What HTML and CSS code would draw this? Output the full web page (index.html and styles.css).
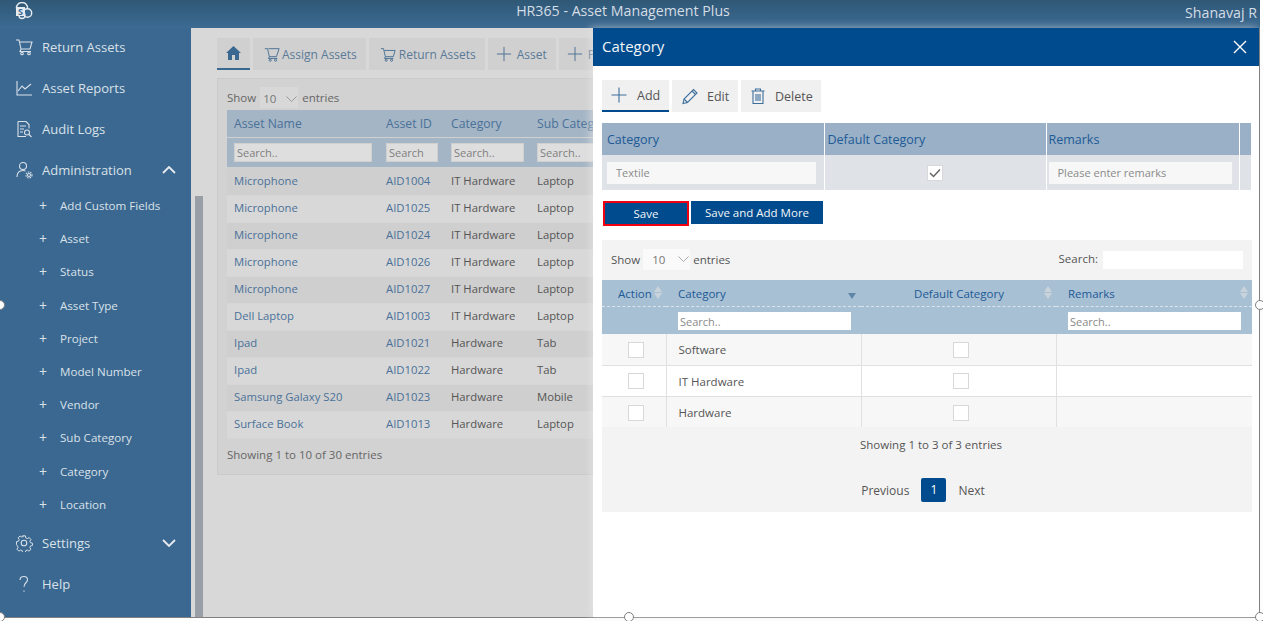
FILE: index.html
```html
<!DOCTYPE html>
<html lang="en">
<head>
    <meta charset="UTF-8">
    <title>HR365 - Asset Management Plus</title>
    <link rel="stylesheet" href="styles.css">
</head>
<body>

<div class="frame">
    <div class="topbar">
        <svg class="logo" width="18" height="18" viewBox="0 0 18 18"><circle cx="7" cy="6" r="5.5" fill="none" stroke="#e6ebf0" stroke-width="1.4"/><circle cx="12.5" cy="11" r="4.2" fill="#3b6890" stroke="#e6ebf0" stroke-width="1.4"/><circle cx="7" cy="13.5" r="3" fill="#3b6890" stroke="#e6ebf0" stroke-width="1.4"/><rect x="1" y="5" width="9" height="9" fill="#e6ebf0"/><text x="5.5" y="12.5" class="logo-s">S</text></svg>
        <span class="app-title">HR365 - Asset Management Plus</span>
        <span class="user-name">Shanavaj R</span>
    </div>

    <div class="body">
        <nav class="sidebar">
            <a class="nav-item">
                <svg class="nav-icon" viewBox="0 0 18 18"><path d="M1 2h3l2 9h9l2-7H5M6 11l-1 2.500h11"/><circle cx="7" cy="15.500" r="1.300"/><circle cx="14" cy="15.500" r="1.300"/></svg>
                Return Assets
            </a>
            <a class="nav-item">
                <svg class="nav-icon" viewBox="0 0 18 18"><path d="M2 2v14h15M3 12l4-5 3 3 6-5"/></svg>
                Asset Reports
            </a>
            <a class="nav-item">
                <svg class="nav-icon" viewBox="0 0 18 18"><path d="M3 1.500h8l3 3v4M3 1.500v15h8M5 6h6M5 9h4M5 12h3"/><circle cx="12" cy="12.500" r="2.500"/><path d="M14 14.500l2.500 2.500"/></svg>
                Audit Logs
            </a>
            <a class="nav-item">
                <svg class="nav-icon" viewBox="0 0 18 18"><circle cx="8" cy="5" r="3.500"/><path d="M2 16c0-4 2-6.500 6-6.500 1 0 2 .2 2.500.5"/><circle cx="14" cy="14" r="1.500"/><circle cx="14" cy="14" r="3" stroke-dasharray="1.500 1"/></svg>
                Administration
                <svg class="nav-arrow" viewBox="0 0 14 8"><path d="M1 7l6-6 6 6"/></svg>
            </a>
            <ul class="sub-nav">
                <li>Add Custom Fields</li>
                <li>Asset</li>
                <li>Status</li>
                <li>Asset Type</li>
                <li>Project</li>
                <li>Model Number</li>
                <li>Vendor</li>
                <li>Sub Category</li>
                <li>Category</li>
                <li>Location</li>
            </ul>
            <a class="nav-item">
                <svg class="nav-icon" viewBox="0 0 18 18"><circle cx="9" cy="9" r="2.800"/><path d="M7.500 1h3l.5 2.300 1.700.8 2-1.200 2 2.200-1.200 2 .7 1.600 2.300.6v2.400l-2.300.6-.7 1.700 1.200 2-2.100 2-2-1.200-1.600.7-.5 2.300h-3l-.5-2.300-1.700-.7-2 1.200-2.100-2.100 1.200-2-.7-1.600L.7 10.700V7.500l2.300-.6.7-1.700-1.200-2 2.100-2 2 1.200 1.700-.8z" transform="translate(.9 .9) scale(.9)"/></svg>
                Settings
                <svg class="nav-arrow" viewBox="0 0 14 8"><path d="M1 1l6 6 6-6"/></svg>
            </a>
            <a class="nav-item">
                <svg class="nav-icon" viewBox="0 0 18 18"><path d="M5 5c0-2.500 2-3.500 4-3.500s3.500 1.300 3.500 3.300c0 3-3.500 3-3.500 7"/><path d="M9 15.500v1.200"/></svg>
                Help
            </a>
        </nav>

        <div class="side-scroll"><div class="side-thumb"></div></div>

        <main class="content">
            <div class="tabs">
                <a class="tab tab-home">
                    <svg width="15" height="14" viewBox="0 0 15 14"><path d="M7.500 0L0 7h2v7h4V9h3v5h4V7h2z" fill="#3b6890"/></svg>
                </a>
                <a class="tab">
                    <svg class="tab-icon" viewBox="0 0 18 18"><path d="M1 3h3l2 9h8l3-9H5M6 12l-1 2h10"/><circle cx="7" cy="16" r="1.200"/><circle cx="13" cy="16" r="1.200"/></svg>
                    Assign Assets
                </a>
                <a class="tab tab-return">
                    <svg class="tab-icon" viewBox="0 0 18 18"><path d="M1 3h3l2 9h9l2-7H5M6 12l-1 2h10"/><circle cx="7" cy="16" r="1.200"/><circle cx="13" cy="16" r="1.200"/></svg>
                    Return Assets
                </a>
                <a class="tab tab-plus">
                    <svg class="tab-icon" viewBox="0 0 18 18"><path d="M9 1v16M1 9h16"/></svg>
                    Asset
                </a>
                <a class="tab tab-plus">
                    <svg class="tab-icon" viewBox="0 0 18 18"><path d="M9 1v16M1 9h16"/></svg>
                    P
                </a>
            </div>

            <div class="card">
                <div class="length-row">
                    Show
                    <span class="length-select">10 <svg width="11" height="6" viewBox="0 0 11 6"><path d="M.5.500l5 5 5-5" fill="none" stroke="#999"/></svg></span>
                    entries
                </div>
                <table class="asset-table">
                    <thead>
                        <tr class="head-row">
                            <th class="col-name">Asset Name</th>
                            <th class="col-id">Asset ID</th>
                            <th class="col-cat">Category</th>
                            <th class="col-sub">Sub Category</th>
                        </tr>
                        <tr class="filter-row">
                            <th><input class="filter filter-name" placeholder="Search.."></th>
                            <th><input class="filter filter-id" placeholder="Search"></th>
                            <th><input class="filter filter-cat" placeholder="Search.."></th>
                            <th><input class="filter filter-sub" placeholder="Search.."></th>
                        </tr>
                    </thead>
                    <tbody>
                        <tr class="odd"><td class="link">Microphone</td><td class="link">AID1004</td><td>IT Hardware</td><td>Laptop</td></tr>
                        <tr><td class="link">Microphone</td><td class="link">AID1025</td><td>IT Hardware</td><td>Laptop</td></tr>
                        <tr class="odd"><td class="link">Microphone</td><td class="link">AID1024</td><td>IT Hardware</td><td>Laptop</td></tr>
                        <tr><td class="link">Microphone</td><td class="link">AID1026</td><td>IT Hardware</td><td>Laptop</td></tr>
                        <tr class="odd"><td class="link">Microphone</td><td class="link">AID1027</td><td>IT Hardware</td><td>Laptop</td></tr>
                        <tr><td class="link">Dell Laptop</td><td class="link">AID1003</td><td>IT Hardware</td><td>Laptop</td></tr>
                        <tr class="odd"><td class="link">Ipad</td><td class="link">AID1021</td><td>Hardware</td><td>Tab</td></tr>
                        <tr><td class="link">Ipad</td><td class="link">AID1022</td><td>Hardware</td><td>Tab</td></tr>
                        <tr class="odd"><td class="link">Samsung Galaxy S20</td><td class="link">AID1023</td><td>Hardware</td><td>Mobile</td></tr>
                        <tr><td class="link">Surface Book</td><td class="link">AID1013</td><td>Hardware</td><td>Laptop</td></tr>
                    </tbody>
                </table>
                <div class="asset-info">Showing 1 to 10 of 30 entries</div>
            </div>
        </main>
    </div>

    <!-- side panel on top of the page -->
    <aside class="panel">
        <div class="panel-head">
            <span>Category</span>
            <svg width="14" height="14" viewBox="0 0 14 14"><path d="M1 1l12 12M13 1L1 13" stroke="#fff" stroke-width="1.400"/></svg>
        </div>
        <div class="panel-body">
            <div class="panel-tabs">
                <a class="ptab ptab-add">
                    <svg class="ptab-icon" viewBox="0 0 18 18"><path d="M9 1.500v15M1.500 9h15"/></svg>
                    Add
                </a>
                <a class="ptab ptab-edit">
                    <svg class="ptab-icon" viewBox="0 0 18 18"><path d="M2 16.500l1-4.500L12.500 2.500l3.500 3.500L6.500 15.500zM3 12l3.500 3.500M11 4l3.500 3.500"/></svg>
                    Edit
                </a>
                <a class="ptab ptab-delete">
                    <svg class="ptab-icon" viewBox="0 0 18 18"><path d="M2.500 4h13M6.500 4V2h5v2M4 4v12.500h10V4M7 7v7M9 7v7M11 7v7"/></svg>
                    Delete
                </a>
            </div>

            <table class="form-table">
                <tr class="form-head">
                    <th class="fc-cat">Category</th>
                    <th class="fc-def">Default Category</th>
                    <th class="fc-rem">Remarks</th>
                    <th></th>
                </tr>
                <tr class="form-row">
                    <td><input class="form-input" placeholder="Textile"></td>
                    <td class="center"><span class="check on"><svg width="12" height="10" viewBox="0 0 12 10"><path d="M1 5l3.500 3.500L11 1.500" fill="none" stroke="#666" stroke-width="1.500"/></svg></span></td>
                    <td class="fc-rem-cell"><input class="form-input" placeholder="Please enter remarks"></td>
                    <td></td>
                </tr>
            </table>

            <div class="form-actions">
                <button class="btn btn-save">Save</button>
                <button class="btn btn-more">Save and Add More</button>
            </div>

            <div class="list-box">
                <div class="list-top">
                    <div class="list-length">
                        Show
                        <span class="list-select">10 <svg width="11" height="6" viewBox="0 0 11 6"><path d="M.5.500l5 5 5-5" fill="none" stroke="#aaa"/></svg></span>
                        entries
                    </div>
                    <label class="list-search">Search: <input class="list-search-input"></label>
                </div>
                <table class="list-table">
                    <thead>
                        <tr class="list-head">
                            <th class="lc-act center-head">Action <span class="sort"></span></th>
                            <th class="lc-cat">Category <span class="sort sort-down"></span></th>
                            <th class="lc-def center-head">Default Category <span class="sort"></span></th>
                            <th class="lc-rem">Remarks <span class="sort"></span></th>
                        </tr>
                        <tr class="list-filter">
                            <th></th>
                            <th><input class="list-input list-input-cat" placeholder="Search.."></th>
                            <th></th>
                            <th><input class="list-input list-input-rem" placeholder="Search.."></th>
                        </tr>
                    </thead>
                    <tbody>
                        <tr><td class="center"><span class="check"></span></td><td>Software</td><td class="center"><span class="check"></span></td><td></td></tr>
                        <tr class="white"><td class="center"><span class="check"></span></td><td>IT Hardware</td><td class="center"><span class="check"></span></td><td></td></tr>
                        <tr><td class="center"><span class="check"></span></td><td>Hardware</td><td class="center"><span class="check"></span></td><td></td></tr>
                    </tbody>
                </table>
                <div class="list-info">Showing 1 to 3 of 3 entries</div>
                <div class="pager">
                    <span>Previous</span>
                    <span class="page-current">1</span>
                    <span>Next</span>
                </div>
            </div>
        </div>
    </aside>

    <!-- resize handles of the pasted picture -->
    <span class="handle h-left"></span>
    <span class="handle h-right"></span>
    <span class="handle h-bottom"></span>
    <span class="handle h-corner-l"></span>
    <span class="handle h-corner-r"></span>
</div>

</body>
</html>
```

FILE: styles.css
```css
* {
    box-sizing: border-box;
}
html, body {
    margin: 0;
    height: 100%;
    background-color: white;
    overflow: hidden;
}
body {
    font-family: "Open Sans", "Noto Sans", sans-serif;
    font-size: 11.500px;
    color: #555;
}
input, button {
    font-family: inherit;
}
table {
    border-collapse: collapse;
    table-layout: fixed;
}
th {
    font-weight: normal;
    text-align: left;
}
input::placeholder {
    color: #8a8a8a;
    opacity: 1;
}

.frame {
    position: relative;
    width: 1260px;
    height: 618px;
    border-bottom: 1px solid #808080;
    display: flex;
    flex-direction: column;
}

/* top bar */
.topbar {
    height: 28px;
    flex: none;
    background: linear-gradient(#2f5876, #3c6a92);
    color: #d5dde5;
    position: relative;
    display: flex;
    justify-content: center;
    align-items: center;
    font-size: 14.200px;
    padding: 0 14px 7px 0;
}
.logo {
    position: absolute;
    left: 15px;
    top: 2px;
}
.logo-s {
    font-size: 9px;
    font-weight: bold;
    fill: #3b6890;
    text-anchor: middle;
}
.user-name {
    position: absolute;
    right: 3px;
    top: 3px;
}

.body {
    flex: 1;
    display: flex;
    min-height: 0;
}

/* sidebar */
.sidebar {
    width: 191px;
    flex: none;
    background-color: #3b6890;
    color: #d9e1e9;
    margin-top: -2px;
}
.nav-item {
    height: 41px;
    display: flex;
    align-items: center;
    padding-left: 15px;
    font-size: 13px;
}
.nav-icon {
    width: 18px;
    height: 18px;
    margin-right: 9px;
    fill: none;
    stroke: #d9e1e9;
    stroke-width: 1.100;
}
.nav-arrow {
    width: 14px;
    height: 8px;
    margin-left: auto;
    margin-right: 15px;
    fill: none;
    stroke: #e6ebf0;
    stroke-width: 1.800;
}
.sub-nav {
    list-style: none;
    margin: 0;
    padding: 0 0 1px 0;
}
.sub-nav li {
    height: 33.200px;
    line-height: 31.500px;
    padding-left: 60px;
    font-size: 11.600px;
    position: relative;
}
.sub-nav li::before {
    content: "+";
    position: absolute;
    left: 39px;
    font-size: 14px;
}

.side-scroll {
    width: 12px;
    flex: none;
    padding: 168px 0 0 4px;
    background-color: #d8d8d8;
}
.side-thumb {
    height: 100%;
    background-color: #9a9ea6;
}

/* page behind the panel */
.content {
    flex: 1;
    min-width: 0;
    background-color: #d8d8d8;
    padding: 10px 0 0 14px;
    overflow: hidden;
}
.tabs {
    display: flex;
    gap: 3px;
    height: 32px;
    font-size: 12px;
}
.tab {
    display: flex;
    align-items: center;
    gap: 2px;
    padding: 0 9px 0 11px;
    background-color: #d0d0d0;
    color: #5a7a98;
    white-space: nowrap;
}
.tab-home {
    width: 33px;
    justify-content: center;
    padding: 0;
    border-bottom: 2px solid #3b6890;
}
.tab-return {
    padding-right: 9px;
    gap: 3px;
}
.tab-plus {
    padding-left: 8px;
    gap: 5px;
}
.tab-icon {
    width: 16px;
    height: 16px;
    fill: none;
    stroke: #4f7495;
    stroke-width: 1.100;
}
.card {
    margin-top: 8px;
    width: 420px;
    height: 397px;
    background-color: #d2d2d2;
    border: 1px solid #cacaca;
    padding: 0 0 0 9px;
}
.length-row {
    height: 31px;
    display: flex;
    align-items: center;
    gap: 4px;
    color: #666;
    padding-top: 5px;
}
.length-select {
    width: 38px;
    height: 21px;
    background-color: #d8d8d8;
    display: flex;
    align-items: center;
    justify-content: space-between;
    padding: 3px 1px 0 3px;
    color: #777;
}
.asset-table {
    width: 393px;
}
.col-name { width: 152px; }
.col-id { width: 65px; }
.col-cat { width: 86px; }
.col-sub { width: 90px; }
.head-row th {
    height: 27px;
    background-color: #a4b5c5;
    color: #4a7199;
    padding: 1px 0 0 7px;
    font-size: 12.200px;
    border-bottom: 1px solid #d0d0d0;
    white-space: nowrap;
    overflow: hidden;
}
.filter-row th {
    height: 31px;
    background-color: #a4b5c5;
    padding: 0 0 0 7px;
    border-bottom: 2px solid #d0d0d0;
}
.filter {
    display: block;
    height: 19px;
    border: 1px solid #d0d0d0;
    background-color: #dedede;
    padding: 0 2px;
    font-size: 11px;
}
.filter::placeholder {
    color: #808080;
}
.filter-name { width: 138px; }
.filter-id { width: 52px; }
.filter-cat { width: 73px; }
.filter-sub { width: 73px; }
.asset-table td {
    height: 27px;
    padding: 0 0 2px 7px;
    font-size: 11.300px;
    color: #555;
    border-bottom: 1px solid #d6d6d6;
    background-color: #d8d8d8;
    white-space: nowrap;
}
.asset-table .odd td {
    background-color: #cfcfcf;
}
.asset-table td.link {
    color: #4a7199;
}
.asset-info {
    margin-top: 8px;
    color: #666;
}

/* category panel */
.panel {
    position: absolute;
    left: 593px;
    top: 28px;
    width: 667px;
    bottom: 0;
    background-color: white;
    box-shadow: -3px 0 8px rgba(230, 230, 230, .6);
    border-right: 1px solid #808080;
}
.panel-head {
    height: 38px;
    background-color: #004b8d;
    color: #f2f5f8;
    font-size: 15px;
    display: flex;
    justify-content: space-between;
    align-items: center;
    padding: 0 12px 2px 9px;
}
.panel-head svg {
    margin-top: 2px;
}
.panel-body {
    padding: 14px 8px 0 9px;
}
.panel-tabs {
    display: flex;
    gap: 3px;
    height: 32px;
}
.ptab {
    display: flex;
    align-items: center;
    background-color: #f0f0f0;
    color: #555;
    font-size: 12.500px;
    height: 32px;
}
.ptab-add {
    width: 67px;
    padding-left: 8px;
    gap: 9px;
    border-bottom: 2px solid #004b8d;
}
.ptab-edit {
    width: 66px;
    padding-left: 9px;
    gap: 8px;
}
.ptab-delete {
    width: 80px;
    padding-left: 8px;
    gap: 8px;
}
.ptab-icon {
    width: 18px;
    height: 18px;
    fill: none;
    stroke: #3f6f9c;
    stroke-width: 1.100;
}
.form-table {
    margin-top: 11px;
    width: 650px;
}
.fc-cat { width: 222px; }
.fc-def { width: 222px; }
.fc-rem { width: 193px; }
.form-head th {
    height: 32px;
    background-color: #9ab0c6;
    color: #1d5a96;
    padding: 0 5px;
    font-size: 12.500px;
    border-right: 1px solid #fff;
}
.form-head .fc-def {
    padding-left: 3px;
}
.form-head .fc-rem {
    padding-left: 2px;
}
.form-row td {
    height: 35px;
    background-color: #dfe2e6;
    padding: 0 8px 0 5px;
    border-right: 1px solid #fff;
}
.form-row .fc-rem-cell {
    padding: 0 7px 0 2px;
}
.form-input {
    display: block;
    width: 100%;
    height: 22px;
    border: 0;
    background-color: #f7f7f7;
    padding: 0 9px;
    font-size: 11px;
}
.center {
    text-align: center;
}
.check {
    display: inline-block;
    vertical-align: middle;
    width: 16px;
    height: 16px;
    border: 1px solid #d8d8d8;
    background-color: white;
}
.check.on {
    display: inline-flex;
    align-items: center;
    justify-content: center;
    margin-left: 2px;
}
.form-actions {
    display: flex;
    align-items: flex-start;
    gap: 2px;
    margin-top: 11px;
    padding-left: 1px;
}
.btn {
    height: 23px;
    border: 0;
    background-color: #004b8d;
    color: #f2f5f8;
    font-size: 11.500px;
    font-weight: 500;
    padding: 0;
}
.btn-save {
    width: 86px;
    height: 25px;
    border: 2px solid #f00010;
}
.btn-more {
    width: 132px;
}
.list-box {
    margin-top: 14px;
    width: 650px;
    height: 272px;
    background-color: #f3f3f3;
}
.list-top {
    height: 40px;
    display: flex;
    justify-content: space-between;
    align-items: center;
    padding: 0 9px 2px;
}
.list-length {
    display: flex;
    align-items: center;
    gap: 3px;
}
.list-select {
    width: 47px;
    height: 21px;
    background-color: #fafafa;
    display: flex;
    align-items: center;
    justify-content: space-between;
    padding: 0 1px 0 9px;
    color: #777;
}
.list-search {
    padding-top: 1px;
}
.list-search-input {
    width: 140px;
    height: 18px;
    border: 0;
    background-color: white;
    vertical-align: middle;
    margin-left: 2px;
}
.list-table {
    width: 650px;
}
.lc-act { width: 64px; }
.lc-cat { width: 195px; }
.lc-def { width: 195px; }
.lc-rem { width: 196px; }
.list-head th {
    height: 26px;
    background-color: #a8c0d4;
    color: #1d5a96;
    position: relative;
    padding: 2px 0 0 12px;
    font-size: 11.500px;
    border-bottom: 1px dashed #dbe4ec;
}
.list-head .center-head {
    text-align: center;
    padding: 2px 0 0 1px;
}
.list-head .lc-act {
    padding: 2px 0 0 16px;
    text-align: left;
}
.sort {
    position: absolute;
    right: 4px;
    top: 6px;
    width: 8px;
    height: 13px;
}
.sort::before, .sort::after {
    content: "";
    position: absolute;
    left: 0;
    border-left: 4px solid transparent;
    border-right: 4px solid transparent;
}
.sort::before {
    top: 0;
    border-bottom: 6px solid #c8d3dc;
}
.sort::after {
    bottom: 0;
    border-top: 6px solid #c8d3dc;
}
.sort-down {
    right: 5px;
    top: 6px;
}
.sort-down::before {
    display: none;
}
.sort-down::after {
    border-top-color: #5f86a8;
}
.list-filter th {
    height: 28px;
    background-color: #a8c0d4;
    padding: 2px 0 0 12px;
}
.list-input {
    display: block;
    height: 18px;
    border: 0;
    background-color: white;
    padding: 0 2px;
    font-size: 11px;
}
.list-input-cat { width: 173px; }
.list-input-rem { width: 173px; }
.list-table td {
    height: 31px;
    padding: 1px 0 0 12px;
    color: #555;
    background-color: #f7f7f7;
    border-bottom: 1px solid #e0e0e0;
    border-left: 1px solid #e0e0e0;
}
.list-table td:first-child {
    border-left: 0;
}
.list-table td.center {
    padding: 1px 0 0 5px;
}
.list-table .white td {
    background-color: white;
}
.list-table tr:last-child td {
    border-bottom: 0;
}
.list-info {
    text-align: center;
    margin-top: 10px;
    height: 35px;
    line-height: 16px;
    padding-left: 8px;
}
.pager {
    display: flex;
    justify-content: center;
    align-items: center;
    gap: 12px;
    margin-right: 8px;
    margin-top: 6px;
    font-size: 12px;
}
.page-current {
    width: 25px;
    height: 24px;
    line-height: 24px;
    text-align: center;
    background-color: #004b8d;
    color: white;
    border-radius: 2px;
}

.handle {
    position: absolute;
    width: 10px;
    height: 10px;
    border: 1.500px solid #808080;
    border-radius: 50%;
    background-color: white;
}
.h-left { left: -5px; top: 300px; }
.h-right { left: 1255px; top: 300px; }
.h-bottom { left: 624px; top: 612px; }
.h-corner-l { left: -5px; top: 612px; }
.h-corner-r { left: 1255px; top: 612px; }
```
